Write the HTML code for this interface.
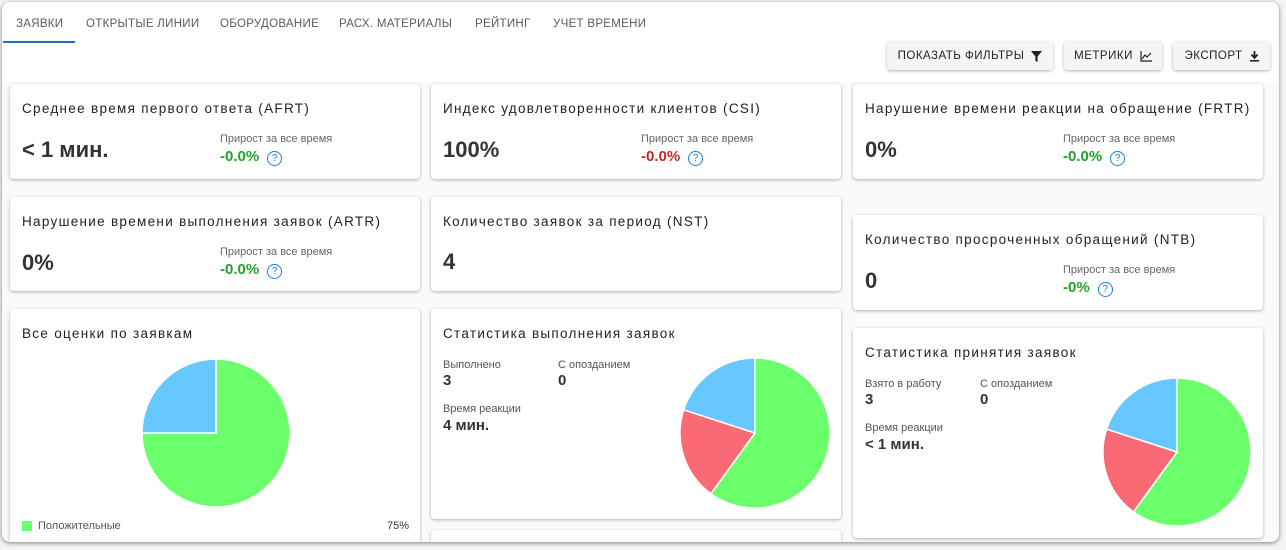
<!DOCTYPE html>
<html><head><meta charset="utf-8"><style>
*{box-sizing:border-box;margin:0;padding:0}
html,body{width:1286px;height:550px;overflow:hidden}
body{background:#f4f4f4;font-family:"Liberation Sans",sans-serif;position:relative;color:#333}
.frame{position:absolute;left:2px;top:2px;width:1277px;height:540px;background:#fafafa;border-radius:8px;box-shadow:0 1px 4px rgba(0,0,0,.5);overflow:hidden}
.top{position:absolute;left:0;top:0;width:1277px;height:80px;background:#fff}
.tab{position:absolute;top:16px;font-size:11.5px;letter-spacing:.3px;color:#5a5a5a}
.ul{position:absolute;left:1px;top:39px;width:72px;height:2px;background:#1e6fc7}
.btn{position:absolute;top:40px;height:28px;background:#f5f5f5;border-radius:3px;box-shadow:0 1px 3px rgba(0,0,0,.3);font-size:11.5px;letter-spacing:.5px;color:#222;display:flex;align-items:center;justify-content:center;gap:7px}
.card{position:absolute;background:#fff;border-radius:4px;box-shadow:0 1px 3px rgba(0,0,0,.3);overflow:hidden}
.t{position:absolute;left:12px;font-size:13.5px;letter-spacing:1.3px;color:#222}
.big{position:absolute;left:12px;font-size:22px;font-weight:bold;color:#333}
.lab{position:absolute;font-size:11px;color:#666}
.pct{position:absolute;font-size:15px;font-weight:bold}
.q{display:inline-block;width:15px;height:15px;border:1.3px solid #1e7fd8;border-radius:50%;color:#1e7fd8;font-size:10px;text-align:center;line-height:13px;margin-left:8px;vertical-align:0px;font-weight:normal}
.s{position:absolute;font-size:11px;color:#555}
.v{position:absolute;font-size:15px;font-weight:bold;color:#333}
</style></head><body>
<div class="frame">
<div class="top">
<span class="tab" style="left:14px">ЗАЯВКИ</span>
<span class="tab" style="left:84px">ОТКРЫТЫЕ ЛИНИИ</span>
<span class="tab" style="left:218px">ОБОРУДОВАНИЕ</span>
<span class="tab" style="left:337px">РАСХ. МАТЕРИАЛЫ</span>
<span class="tab" style="left:473px">РЕЙТИНГ</span>
<span class="tab" style="left:551px">УЧЕТ ВРЕМЕНИ</span>
<div class="ul"></div>
<div class="btn" style="left:885px;width:166px">ПОКАЗАТЬ ФИЛЬТРЫ <svg width="11" height="11" viewBox="0 0 10 10"><path d="M0 0H10L6 5V10L4 9V5Z" fill="#222"/></svg></div>
<div class="btn" style="left:1062px;width:98px">МЕТРИКИ <svg width="12" height="11" viewBox="0 0 12 11"><path d="M1 0V10H12M2 8L5 4L7 6L11 2" stroke="#222" stroke-width="1.2" fill="none"/></svg></div>
<div class="btn" style="left:1171px;width:97px">ЭКСПОРТ <svg width="9" height="11" viewBox="0 0 9 11"><path d="M4.5 0V6M1.5 3.5L4.5 7L7.5 3.5" stroke="#222" stroke-width="1.8" fill="none"/><rect x="0" y="9" width="9" height="1.6" fill="#222"/></svg></div>
</div>

<div class="card" style="left:8px;top:82px;width:410px;height:95px">
<div class="t" style="top:17px">Среднее время первого ответа (AFRT)</div>
<div class="big" style="top:53px">&lt; 1 мин.</div>
<div class="lab" style="left:210px;top:49px">Прирост за все время</div>
<div class="pct" style="left:210px;top:64px;color:#22a22a">-0.0%<span class="q">?</span></div>
</div>
<div class="card" style="left:429px;top:82px;width:410px;height:95px">
<div class="t" style="top:17px">Индекс удовлетворенности клиентов (CSI)</div>
<div class="big" style="top:53px">100%</div>
<div class="lab" style="left:210px;top:49px">Прирост за все время</div>
<div class="pct" style="left:210px;top:64px;color:#c62828">-0.0%<span class="q">?</span></div>
</div>
<div class="card" style="left:851px;top:82px;width:410px;height:95px">
<div class="t" style="top:17px">Нарушение времени реакции на обращение (FRTR)</div>
<div class="big" style="top:53px">0%</div>
<div class="lab" style="left:210px;top:49px">Прирост за все время</div>
<div class="pct" style="left:210px;top:64px;color:#22a22a">-0.0%<span class="q">?</span></div>
</div>

<div class="card" style="left:8px;top:195px;width:410px;height:94px">
<div class="t" style="top:17px">Нарушение времени выполнения заявок (ARTR)</div>
<div class="big" style="top:53px">0%</div>
<div class="lab" style="left:210px;top:49px">Прирост за все время</div>
<div class="pct" style="left:210px;top:64px;color:#22a22a">-0.0%<span class="q">?</span></div>
</div>
<div class="card" style="left:429px;top:195px;width:410px;height:94px">
<div class="t" style="top:17px">Количество заявок за период (NST)</div>
<div class="big" style="top:52px">4</div>
</div>
<div class="card" style="left:851px;top:213px;width:410px;height:95px">
<div class="t" style="top:17px">Количество просроченных обращений (NTB)</div>
<div class="big" style="top:53px">0</div>
<div class="lab" style="left:210px;top:49px">Прирост за все время</div>
<div class="pct" style="left:210px;top:64px;color:#22a22a">-0%<span class="q">?</span></div>
</div>

<div class="card" style="left:8px;top:307px;width:410px;height:260px">
<div class="t" style="top:17px">Все оценки по заявкам</div>
<svg style="position:absolute;left:131px;top:49px" width="150" height="150" viewBox="-75 -75 150 150">
<path d="M0 0L0 -74A74 74 0 1 1 -74 0Z" fill="#6bff6b" stroke="#fff" stroke-width="1.5"/>
<path d="M0 0L-74 0A74 74 0 0 1 0 -74Z" fill="#66c8ff" stroke="#fff" stroke-width="1.5"/>
</svg>
<div style="position:absolute;left:12px;top:212px;width:10px;height:10px;background:#6bff6b"></div>
<div class="s" style="left:28px;top:211px">Положительные</div>
<div class="s" style="left:377px;top:211px;color:#333">75%</div>
</div>

<div class="card" style="left:429px;top:307px;width:410px;height:210px">
<div class="t" style="top:17px">Статистика выполнения заявок</div>
<div class="s" style="left:12px;top:50px">Выполнено</div><div class="v" style="left:12px;top:63px">3</div>
<div class="s" style="left:127px;top:50px">С опозданием</div><div class="v" style="left:127px;top:63px">0</div>
<div class="s" style="left:12px;top:94px">Время реакции</div><div class="v" style="left:12px;top:108px">4 мин.</div>
<svg style="position:absolute;left:248px;top:48px" width="152" height="152" viewBox="-76 -76 152 152">
<path d="M0 0L0 -75A75 75 0 1 1 -44.1 60.7Z" fill="#6bff6b" stroke="#fff" stroke-width="1.5"/>
<path d="M0 0L-44.1 60.7A75 75 0 0 1 -71.3 -23.2Z" fill="#fa6a74" stroke="#fff" stroke-width="1.5"/>
<path d="M0 0L-71.3 -23.2A75 75 0 0 1 0 -75Z" fill="#66c8ff" stroke="#fff" stroke-width="1.5"/>
</svg>
</div>
<div class="card" style="left:429px;top:528px;width:410px;height:40px"></div>

<div class="card" style="left:851px;top:326px;width:410px;height:210px">
<div class="t" style="top:17px">Статистика принятия заявок</div>
<div class="s" style="left:12px;top:50px">Взято в работу</div><div class="v" style="left:12px;top:63px">3</div>
<div class="s" style="left:127px;top:50px">С опозданием</div><div class="v" style="left:127px;top:63px">0</div>
<div class="s" style="left:12px;top:94px">Время реакции</div><div class="v" style="left:12px;top:108px">&lt; 1 мин.</div>
<svg style="position:absolute;left:248px;top:48px" width="152" height="152" viewBox="-76 -76 152 152">
<path d="M0 0L0 -74A74 74 0 1 1 -43.5 59.9Z" fill="#6bff6b" stroke="#fff" stroke-width="1.5"/>
<path d="M0 0L-43.5 59.9A74 74 0 0 1 -70.4 -22.9Z" fill="#fa6a74" stroke="#fff" stroke-width="1.5"/>
<path d="M0 0L-70.4 -22.9A74 74 0 0 1 0 -74Z" fill="#66c8ff" stroke="#fff" stroke-width="1.5"/>
</svg>
</div>
</div>
</body></html>
